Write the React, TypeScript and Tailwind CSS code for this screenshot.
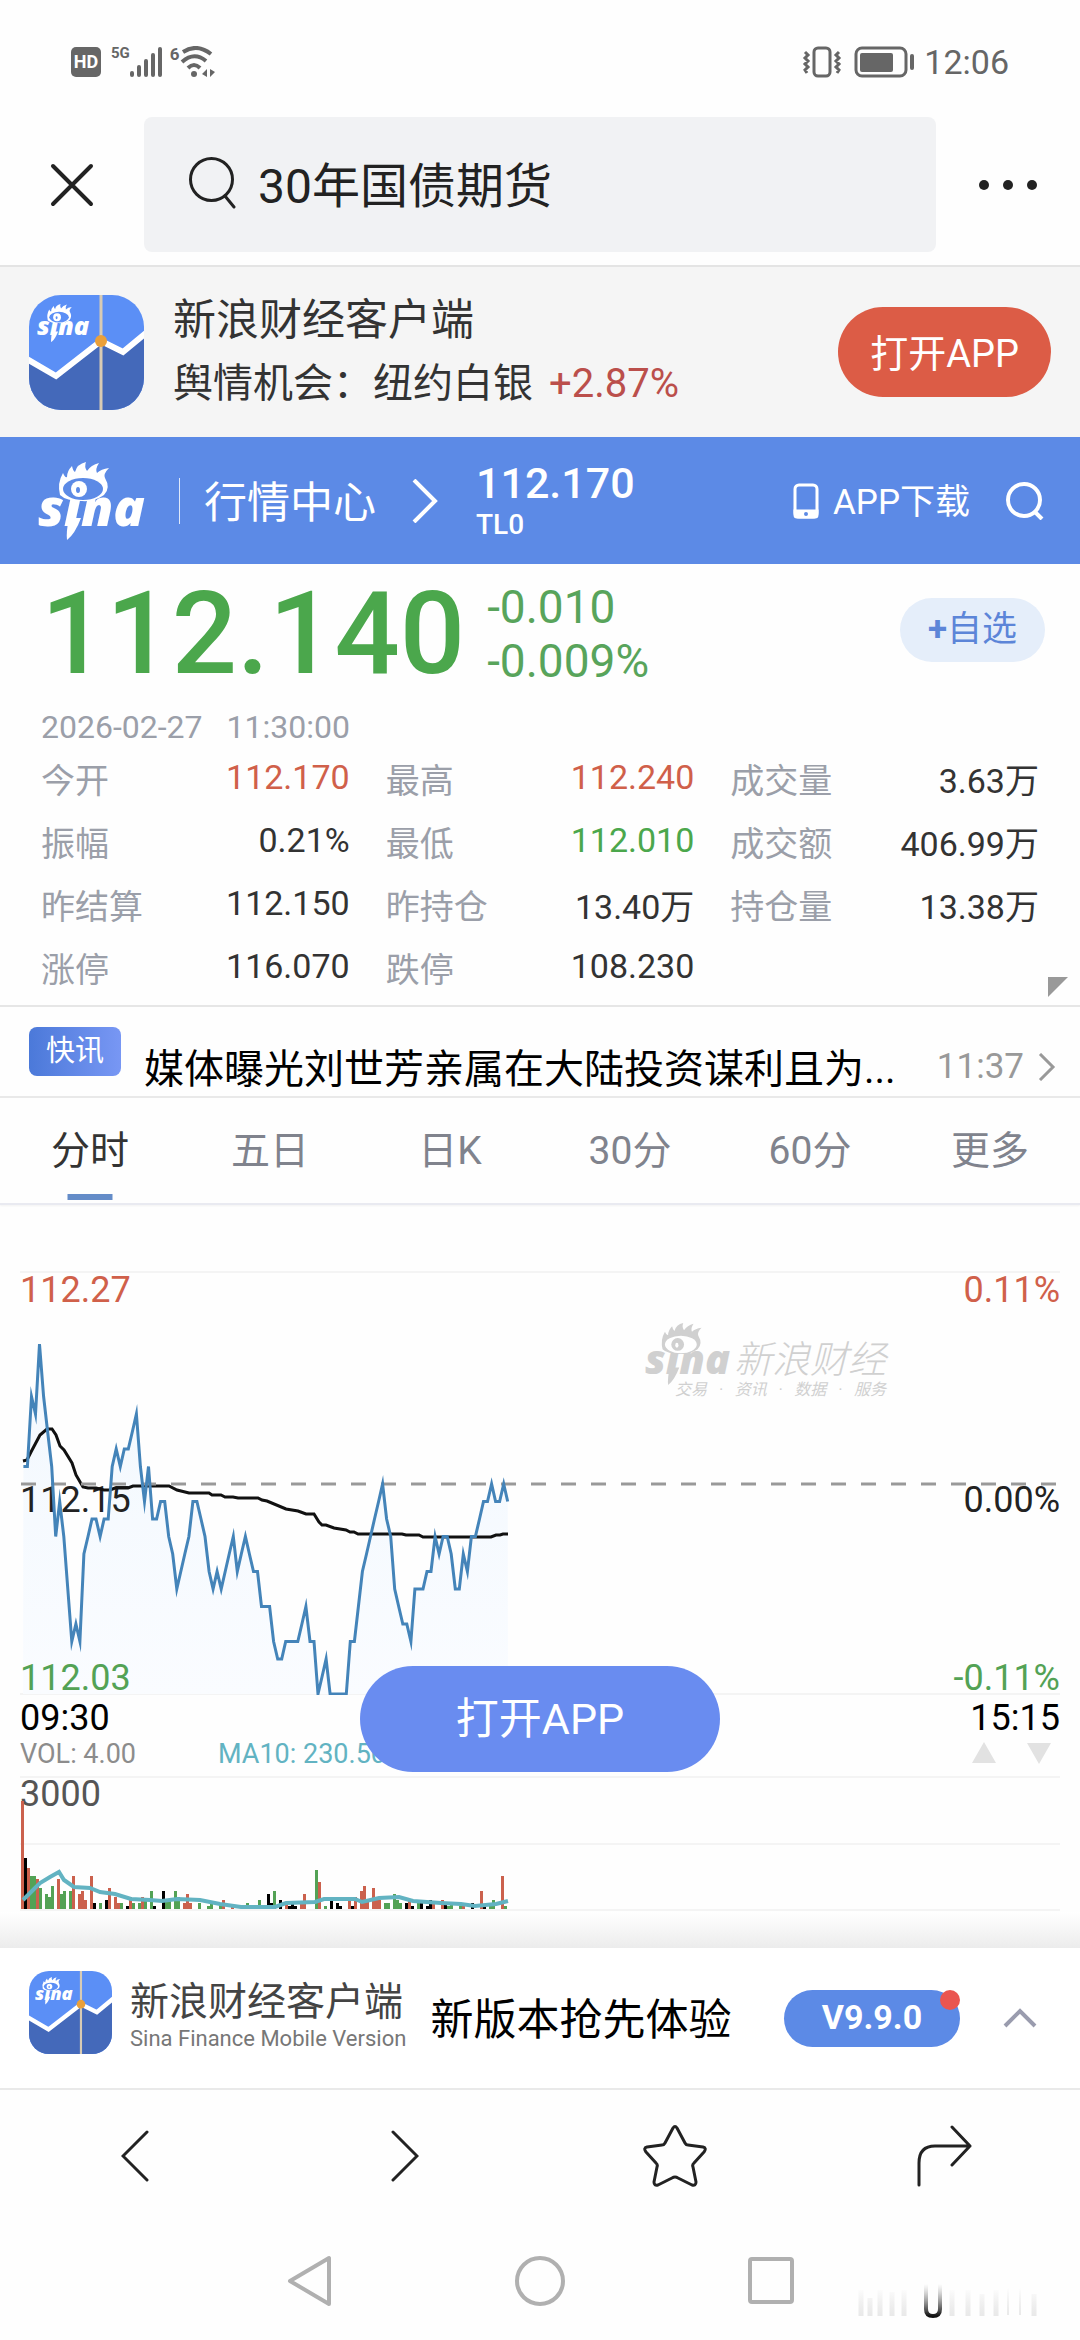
import { useState } from "react";

const QUOTES = [
  { label: "今开", value: "112.170", tone: "up" },
  { label: "最高", value: "112.240", tone: "up" },
  { label: "成交量", value: "3.63万" },
  { label: "振幅", value: "0.21%" },
  { label: "最低", value: "112.010", tone: "down" },
  { label: "成交额", value: "406.99万" },
  { label: "昨结算", value: "112.150" },
  { label: "昨持仓", value: "13.40万" },
  { label: "持仓量", value: "13.38万" },
  { label: "涨停", value: "116.070" },
  { label: "跌停", value: "108.230" },
];

const TABS = ["分时", "五日", "日K", "30分", "60分", "更多"];

// One entry per minute, in ticks of 0.01 above 112.03
const PRICES = [
  13, 13, 17, 16, 20, 17, 15, 13, 9, 11, 9, 6, 3, 4, 3, 8, 9, 10, 10, 9, 10, 10,
  13, 14, 13, 14, 14, 15, 16, 13, 11, 13, 10, 10, 11, 11, 9, 8, 6, 7, 8, 9, 11,
  11, 10, 9, 7, 6, 7, 6, 7, 8, 9, 7, 8, 9, 8, 7, 7, 5, 5, 5, 3, 2, 2, 3, 3, 3, 3,
  4, 5, 3, 3, 0, 1, 2, 0, 0, 0, 0, 0, 3, 3, 5, 7, 8, 9, 10, 11, 12, 10, 9, 6, 5,
  4, 4, 3, 6, 6, 6, 7, 7, 9, 8, 9, 9, 8, 6, 6, 8, 7, 9, 9, 10, 11, 11, 12, 11, 11,
  12, 11,
];

const AVERAGE =
  "3,190 7,189 11,181 20,164 27,158 32,158 36,164 40,175 44,179 52,192 56,204 63,216 68,217 76,217 84,219 90,219 95,217 108,217 113,215 149,215 157,219 169,222 189,222 192,224 201,224 205,226 213,226 218,227 238,227 242,229 247,230 266,238 278,240 286,243 294,243 299,251 302,254 306,254 314,257 326,259 330,261 334,261 338,263 382,263 386,264 399,264 403,266 471,266 476,264 480,264 483,263 488,263";

const VOLUME_AVERAGE =
  "3,124 11,116 20,107 30,101 39,96 44,104 54,111 70,112 80,116 95,118 111,123 130,124 142,125 157,123 180,124 200,128 221,131 242,131 255,131 266,127 295,126 304,123 335,123 342,126 359,122 379,121 393,125 421,127 441,128 455,130 476,128 488,125";

// slot, height, colour (r = up, g = down, k = flat)
const VOLUMES: [number, number, "r" | "g" | "k"][] = [
  [0, 108, "r"], [1, 51, "k"], [2, 41, "r"], [3, 33, "g"], [4, 33, "g"], [5, 30, "r"], [6, 21, "g"],
  [8, 15, "g"], [9, 12, "g"], [10, 23, "g"], [12, 30, "r"], [13, 15, "g"], [14, 18, "g"],
  [16, 18, "g"], [17, 33, "r"], [19, 15, "r"], [20, 18, "r"], [21, 9, "r"], [23, 33, "r"],
  [24, 6, "k"], [26, 6, "g"], [28, 9, "k"], [29, 21, "r"], [31, 12, "r"], [32, 6, "r"],
  [33, 6, "g"], [35, 3, "k"], [36, 12, "r"], [37, 6, "g"], [39, 6, "g"], [40, 12, "r"],
  [41, 9, "g"], [43, 18, "g"], [44, 3, "k"], [47, 18, "k"], [48, 9, "g"], [49, 9, "g"],
  [51, 18, "g"], [52, 12, "g"], [54, 6, "r"], [55, 15, "r"], [56, 6, "r"], [59, 6, "g"],
  [62, 3, "g"], [63, 6, "g"], [66, 6, "g"], [67, 9, "r"], [70, 3, "r"], [75, 6, "g"],
  [79, 9, "g"], [82, 15, "k"], [83, 6, "k"], [84, 18, "g"], [86, 9, "k"], [88, 6, "r"],
  [89, 3, "k"], [90, 6, "k"], [91, 3, "k"], [93, 6, "r"], [94, 15, "r"], [98, 39, "g"],
  [99, 27, "r"], [101, 3, "g"], [103, 9, "k"], [105, 6, "k"], [106, 3, "k"], [109, 9, "r"],
  [110, 3, "k"], [111, 12, "r"], [113, 18, "r"], [114, 23, "r"], [115, 9, "r"], [117, 21, "r"],
  [118, 12, "r"], [119, 9, "r"], [121, 6, "g"], [122, 6, "g"], [124, 15, "g"], [125, 9, "g"],
  [126, 6, "g"], [128, 6, "k"], [129, 9, "r"], [130, 3, "k"], [132, 9, "g"], [133, 6, "k"],
  [135, 3, "k"], [136, 9, "k"], [137, 6, "r"], [140, 9, "r"], [141, 6, "k"], [142, 3, "g"],
  [143, 6, "g"], [146, 3, "g"], [147, 6, "r"], [150, 6, "k"], [153, 18, "r"], [154, 3, "k"],
  [156, 3, "g"], [157, 9, "g"], [160, 33, "r"], [161, 3, "g"],
];

const BAR_COLORS = { r: "#cb614d", g: "#53a255", k: "#000000" };

const pricePoints = PRICES.map(
  (tick, i) => `${(3.4 + i * 4.036).toFixed(1)},${(423 - tick * 17.5).toFixed(1)}`,
).join(" ");

interface SinaLogoProps {
  className: string;
  color: string;
  hole: string;
}

const SinaLogo = ({ className, color, hole }: SinaLogoProps) => (
  <svg viewBox="0 0 108 78" className={className} role="img" aria-label="sina">
    <text
      x="0"
      y="64"
      fontSize="52"
      fontWeight="800"
      fontStyle="italic"
      fontFamily='"Open Sans", "Noto Sans", sans-serif'
      fill={color}
    >
      sina
    </text>
    <path d="M31 56 L43 56 Q37 72 29 78 Q28 70 31 56Z" fill={color} />
    <path
      d="M22 33 Q19 21 25 11 Q27 16 29 15 Q29 9 34 4 Q35 9 37 10 Q39 2 48 0 Q46 5 49 9 Q53 3 61 1 Q57 7 59 11 Q63 7 71 6 Q65 12 67 16 Q73 26 66 33 Q56 40 44 39 Q28 39 22 33Z"
      fill={color}
    />
    <ellipse cx="45" cy="27" rx="20" ry="11" fill={hole} />
    <circle cx="41" cy="27" r="8" fill={color} />
    <ellipse cx="40" cy="28" rx="2" ry="3" fill={hole} />
  </svg>
);

const AppLogo = ({ className }: { className: string }) => (
  <div className={`relative shrink-0 overflow-hidden ${className}`}>
    <svg viewBox="0 0 115 115" className="h-full w-full">
      <rect width="115" height="115" fill="#5b8ff6" />
      <path d="M0 66 L27 82 L72 47 L94 58 L115 41 V115 H0Z" fill="#4469ba" />
      <path d="M-2 64 L27 81 L72 46 L94 57 L117 38" fill="none" stroke="#fff" strokeWidth="6" />
      <path d="M72 0 V115" stroke="#d8cbb4" strokeWidth="3" />
      <circle cx="72" cy="46" r="6" fill="#eaa03b" />
    </svg>
    <SinaLogo className="absolute left-[7%] top-[8%] w-[46%]" color="#fff" hole="#5b8ff6" />
  </div>
);

const SearchIcon = ({ className }: { className: string }) => (
  <svg viewBox="0 0 48 54" className={className} fill="none" stroke="currentColor" strokeWidth="3">
    <circle cx="23.5" cy="23.5" r="21" />
    <path d="M37 40 L46 51" strokeLinecap="round" />
  </svg>
);

const StatusBar = () => (
  <div className="flex h-[117px] items-center justify-between pl-[71px] pr-[71px] pt-[7px] text-[#666]">
    <div className="flex items-center">
      <span className="flex h-[30px] w-[30px] items-center justify-center rounded-[5px] bg-[#666] text-[18px] font-bold leading-none text-white">
        HD
      </span>
      <span className="ml-[10px] self-start text-[15px] font-bold leading-none">5G</span>
      <svg viewBox="0 0 32 32" className="h-8 w-8" fill="currentColor">
        <rect x="0" y="25" width="4" height="6" rx="2" />
        <rect x="7" y="19" width="4" height="12" rx="2" />
        <rect x="14" y="13" width="4" height="18" rx="2" />
        <rect x="21" y="7" width="4" height="24" rx="2" />
        <rect x="28" y="1" width="4" height="30" rx="2" />
      </svg>
      <span className="ml-2 self-start text-[17px] font-bold leading-none">6</span>
      <svg viewBox="0 0 36 32" className="h-8 w-9" fill="none" stroke="currentColor" strokeWidth="4">
        <path d="M3 6 Q17 -3 31 8" />
        <path d="M2 16 Q14 5 26 15" />
        <path d="M8 22 Q14 16 20 22" />
        <circle cx="14" cy="28" r="3" fill="currentColor" stroke="none" />
        <path d="M27 23 V31 L22 28Z M30 23 V31 L35 26Z" fill="currentColor" stroke="none" />
      </svg>
    </div>
    <div className="flex items-center">
      <svg viewBox="0 0 40 32" className="h-8 w-10" fill="none" stroke="currentColor" strokeWidth="3">
        <rect x="12" y="2" width="16" height="28" rx="4" />
        <path d="M3 6 L6 9 L3 12 L6 15 L3 18 L6 21 L3 24 L5 27 M37 6 L34 9 L37 12 L34 15 L37 18 L34 21 L37 24 L35 27" />
      </svg>
      <svg viewBox="0 0 60 32" className="ml-3 h-8 w-[60px]">
        <rect x="2" y="2" width="50" height="28" rx="6" fill="none" stroke="currentColor" strokeWidth="3" />
        <rect x="6" y="7" width="33" height="19" rx="2" fill="currentColor" />
        <rect x="56" y="8" width="4" height="16" rx="2" fill="currentColor" />
      </svg>
      <span className="ml-[10px] text-[34px] leading-9">12:06</span>
    </div>
  </div>
);

const SearchRow = () => (
  <div className="border-b-2 border-[#e4e4e4] pb-[13px]">
    <div className="flex h-[135px] items-center">
      <button aria-label="关闭" className="flex w-36 justify-center text-[#222]">
        <svg viewBox="0 0 44 44" className="h-11 w-11" stroke="currentColor" strokeWidth="4" strokeLinecap="round">
          <path d="M3 3 L41 41 M41 3 L3 41" />
        </svg>
      </button>
      <label className="flex h-full flex-1 items-center rounded-lg bg-[#f1f2f4] pl-11 text-[#222]">
        <SearchIcon className="mb-1 h-[54px] w-12 shrink-0" />
        <input
          aria-label="搜索"
          defaultValue="30年国债期货"
          className="ml-[22px] mt-1 min-w-0 flex-1 bg-transparent text-[48px] leading-[60px] outline-none"
        />
      </label>
      <button aria-label="更多" className="flex w-36 justify-center text-[#222]">
        <svg viewBox="0 0 60 12" className="h-3 w-[60px]" fill="currentColor">
          <circle cx="6" cy="6" r="5" />
          <circle cx="30" cy="6" r="5" />
          <circle cx="54" cy="6" r="5" />
        </svg>
      </button>
    </div>
  </div>
);

const Promo = () => (
  <div className="flex h-[170px] items-center bg-[#f5f5f5] px-[29px]">
    <AppLogo className="h-[115px] w-[115px] rounded-[32px]" />
    <div className="ml-[29px] flex-1 text-[#333]">
      <p className="text-[43px] leading-[64px]">新浪财经客户端</p>
      <p className="text-[40px] leading-[64px]">
        舆情机会：纽约白银<span className="ml-4 text-[#bb4f4b]">+2.87%</span>
      </p>
    </div>
    <button className="h-[90px] w-[213px] rounded-full bg-[#dc5c46] pt-1 text-[38px] text-white">打开APP</button>
  </div>
);

const Header = () => (
  <header className="flex h-[127px] items-center bg-[#5c8ae6] pl-[38px] pr-9 text-white">
    <SinaLogo className="h-[78px] w-[108px]" color="#fff" hole="#5c8ae6" />
    <div className="ml-[33px] h-[46px] w-px bg-white/80" />
    <a href="#" className="ml-6 pt-1 text-[43px] leading-[52px]">行情中心</a>
    <svg viewBox="0 0 26 44" className="ml-9 h-11 w-[26px]" fill="none" stroke="currentColor" strokeWidth="4">
      <path d="M2 1 L23 22 L2 43" />
    </svg>
    <div className="ml-[38px] flex-1 pt-1 font-medium">
      <p className="text-[43px] leading-[44px]">112.170</p>
      <p className="text-[28px] leading-[40px]">TL0</p>
    </div>
    <a href="#" className="flex items-center text-[35px] leading-[44px]">
      <svg viewBox="0 0 26 36" className="mr-[14px] h-9 w-[26px]" fill="none" stroke="currentColor" strokeWidth="3">
        <rect x="2" y="2" width="22" height="32" rx="4" />
        <path d="M2 28 H24 V32 Q24 34 22 34 H4 Q2 34 2 32Z" fill="currentColor" />
        <circle cx="13" cy="31" r="1" stroke="#5c8ae6" strokeWidth="2" />
      </svg>
      <span className="pt-1">APP下载</span>
    </a>
    <button aria-label="搜索" className="ml-9">
      <svg viewBox="0 0 38 38" className="h-[38px] w-[38px]" fill="none" stroke="currentColor" strokeWidth="4">
        <circle cx="18" cy="18" r="16" />
        <path d="M29 30 L36 37" />
      </svg>
    </button>
  </header>
);

const QuotePanel = () => (
  <section className="relative h-[443px] border-b-2 border-[#e6e6e6] px-[41px] pt-[18px]">
    <div className="flex h-[104px] items-center">
      <p className="text-[115px] font-medium leading-[104px] text-[#4ba74c]">112.140</p>
      <div className="ml-[22px] flex-1 text-[46px] leading-[54px] text-[#58a45b]">
        <p>-0.010</p>
        <p>-0.009%</p>
      </div>
      <button className="-mr-[6px] mb-2 h-16 w-[145px] rounded-full bg-[#e5eefa] text-[35px] text-[#5c85d8]">
        <b>+</b>自选
      </button>
    </div>
    <p className="mt-[23px] text-[32px] leading-9 text-[#9b9fa9]">
      2026-02-27<span className="ml-6">11:30:00</span>
    </p>
    <dl className="mt-[14px] grid grid-cols-3 gap-x-9 text-[34px]">
      {QUOTES.map(({ label, value, tone }) => (
        <div key={label} className="flex h-[63px] items-start justify-between">
          <dt className="leading-[44px] text-[#9b9fa9]">{label}</dt>
          <dd
            className={`${value.endsWith("万") ? "leading-[44px]" : "leading-9"} ${
              tone === "up" ? "text-[#d0604a]" : tone === "down" ? "text-[#4ba74c]" : "text-[#333]"
            }`}
          >
            {value}
          </dd>
        </div>
      ))}
    </dl>
    <svg viewBox="0 0 20 20" className="absolute bottom-2 right-3 h-5 w-5" fill="#999">
      <path d="M0 0 H20 L0 20Z" />
    </svg>
  </section>
);

const NewsRow = () => (
  <a href="#" className="flex h-[91px] items-start border-b-2 border-[#e9e9e9] px-[29px] pr-6">
    <span className="mt-5 h-[49px] w-[92px] rounded-lg bg-linear-to-r from-[#4b79d9] to-[#7897f4] text-center text-[29px] leading-[48px] text-white">
      快讯
    </span>
    <span className="ml-[23px] mt-9 flex-1 truncate text-[40px] leading-[54px] text-black">
      媒体曝光刘世芳亲属在大陆投资谋利且为...
    </span>
    <span className="mt-9 text-[35px] leading-[48px] text-[#999]">11:37</span>
    <svg viewBox="0 0 18 28" className="ml-[14px] mt-[46px] h-7 w-[18px]" fill="none" stroke="#999" strokeWidth="3">
      <path d="M2 1 L15 14 L2 27" />
    </svg>
  </a>
);

const Watermark = () => (
  <div className="absolute right-[174px] top-[52px] flex items-start text-[#d0d0d0]">
    <SinaLogo className="h-[62px] w-[86px]" color="#d0d0d0" hole="#fff" />
    <div className="-ml-14 mt-4 text-right italic">
      <p className="text-[38px] font-light leading-[42px]">新浪财经</p>
      <p className="whitespace-pre text-[16px] leading-[18px]">交易   ·   资讯   ·   数据   ·   服务</p>
    </div>
  </div>
);

const PriceChart = () => (
  <div className="relative h-[424px] text-[36px] leading-9">
    <svg viewBox="0 0 1040 424" preserveAspectRatio="none" className="h-full w-full">
      <defs>
        <linearGradient id="area" x1="0" y1="0" x2="0" y2="1">
          <stop offset="0" stopColor="#f0f7fe" stopOpacity="0.8" />
          <stop offset="1" stopColor="#fafcff" />
        </linearGradient>
      </defs>
      <path d="M0 1 H1040 M0 423 H1040" stroke="#f4f4f4" strokeWidth="2" />
      <polygon points={`3,423 ${pricePoints} 488,423`} fill="url(#area)" />
    </svg>
    <div className="absolute inset-x-0 top-px flex h-full flex-col justify-between">
      <div className="flex justify-between text-[#d0604a]">
        <span>112.27</span>
        <span>0.11%</span>
      </div>
      <div className="flex justify-between pt-8 text-[#222]">
        <span>112.15</span>
        <span>0.00%</span>
      </div>
      <div className="flex justify-between text-[#53a255]">
        <span>112.03</span>
        <span>-0.11%</span>
      </div>
    </div>
    <svg
      viewBox="0 0 1040 424"
      preserveAspectRatio="none"
      className="absolute inset-0 h-full w-full"
      fill="none"
      strokeMiterlimit="10"
    >
      <polyline points={AVERAGE} stroke="#111" strokeWidth="3" />
      <path d="M1 213 H1040" stroke="#999" strokeWidth="3" strokeDasharray="15 15" />
      <polyline points={pricePoints} stroke="#4484b9" strokeWidth="3" />
    </svg>
    <Watermark />
  </div>
);

const VolumeChart = () => (
  <div className="relative h-[136px]">
    <span className="absolute left-0 top-0 text-[36px] leading-9 text-[#555]">3000</span>
    <svg viewBox="0 0 1040 136" preserveAspectRatio="none" className="relative h-full w-full">
      <path d="M0 1 H1040 M0 68 H1040 M0 134 H1040" stroke="#f4f4f4" strokeWidth="2" />
      {VOLUMES.map(([slot, height, color]) => (
        <rect key={slot} x={1 + slot * 3} y={133 - height} width="3" height={height} fill={BAR_COLORS[color]} />
      ))}
      <polyline points={VOLUME_AVERAGE} fill="none" stroke="#62b3c2" strokeWidth="4" />
    </svg>
  </div>
);

const BottomBar = () => (
  <div className="relative flex h-[142px] items-center border-b-2 border-[#e9e9e9] bg-white pl-[29px] pr-[43px]">
    <AppLogo className="mb-3 h-[83px] w-[83px] rounded-[20px]" />
    <div className="mb-1 ml-[18px] text-[#444]">
      <p className="text-[39px] leading-[46px]">新浪财经客户端</p>
      <p className="text-[22px] leading-7 text-[#777]">Sina Finance Mobile Version</p>
    </div>
    <p className="ml-6 flex-1 pt-1 text-[43px] leading-[52px] text-black">新版本抢先体验</p>
    <button className="relative h-[57px] w-[176px] rounded-full bg-[#5c8ae6] pb-0.5 text-[34px] font-bold text-white">
      V9.9.0
      <span className="absolute right-0 top-0 h-5 w-5 rounded-full bg-[#ea5550]" />
    </button>
    <button aria-label="展开" className="ml-[43px]">
      <svg viewBox="0 0 34 20" className="h-5 w-[34px]" fill="none" stroke="#9a9cae" strokeWidth="4">
        <path d="M2 18 L17 3 L32 18" />
      </svg>
    </button>
  </div>
);

const BrowserNav = () => (
  <nav className="grid h-[132px] grid-cols-4 place-items-center text-[#222]">
    <button aria-label="后退">
      <svg viewBox="0 0 28 52" className="h-[52px] w-7" fill="none" stroke="currentColor" strokeWidth="3" strokeLinecap="round">
        <path d="M26 2 L2 26 L26 50" />
      </svg>
    </button>
    <button aria-label="前进">
      <svg viewBox="0 0 28 52" className="h-[52px] w-7" fill="none" stroke="currentColor" strokeWidth="3" strokeLinecap="round">
        <path d="M2 2 L26 26 L2 50" />
      </svg>
    </button>
    <button aria-label="收藏">
      <svg viewBox="0 0 64 62" className="h-[62px] w-16" fill="none" stroke="currentColor" strokeWidth="3" strokeLinejoin="round">
        <path d="M30 3 Q32 0 34 3 L42 18 Q43 20 45 20 L60 22 Q64 23 61 27 L51 38 Q49 40 50 42 L53 57 Q53 61 49 60 L35 53 Q32 51 29 53 L15 60 Q11 61 11 57 L14 42 Q15 40 13 38 L3 27 Q0 23 4 22 L19 20 Q21 20 22 18Z" />
      </svg>
    </button>
    <button aria-label="分享">
      <svg viewBox="0 0 56 62" className="h-[62px] w-14" fill="none" stroke="currentColor" strokeWidth="3" strokeLinecap="round" strokeLinejoin="round">
        <path d="M2 60 V38 Q2 21 18 21 H53 M35 2 L53 21 L35 40" />
      </svg>
    </button>
  </nav>
);

const SystemNav = () => (
  <div className="relative flex h-[118px] items-center justify-center gap-[182px] text-[#b0b0b0]">
    <button aria-label="返回">
      <svg viewBox="0 0 46 52" className="h-[52px] w-[46px]" fill="none" stroke="currentColor" strokeWidth="4" strokeLinejoin="round">
        <path d="M43 3 V49 L4 26Z" />
      </svg>
    </button>
    <button aria-label="主屏幕">
      <svg viewBox="0 0 52 52" className="h-[52px] w-[52px]" fill="none" stroke="currentColor" strokeWidth="4">
        <circle cx="26" cy="26" r="23" />
      </svg>
    </button>
    <button aria-label="最近任务">
      <svg viewBox="0 0 46 48" className="h-12 w-[46px]" fill="none" stroke="currentColor" strokeWidth="4">
        <rect x="2" y="2" width="42" height="43" rx="2" />
      </svg>
    </button>
    <svg viewBox="0 0 200 40" className="absolute bottom-5 right-6 h-10 w-[200px]" fill="none">
      <defs>
        <linearGradient id="fade" gradientUnits="userSpaceOnUse" x1="0" y1="4" x2="0" y2="36">
          <stop offset="0" stopColor="#888" stopOpacity="0" />
          <stop offset="1" stopColor="#111" />
        </linearGradient>
        <linearGradient id="streak" gradientUnits="userSpaceOnUse" x1="0" y1="8" x2="0" y2="38">
          <stop offset="0" stopColor="#ddd" stopOpacity="0" />
          <stop offset="1" stopColor="#e8e8e8" />
        </linearGradient>
      </defs>
      <path d="M5 10 V36 M14 18 V36 M24 10 V36 M36 12 V36 M48 10 V36 M96 10 V36 M112 10 V36 M126 14 V36 M140 10 V36 M178 14 V36" stroke="url(#streak)" strokeWidth="5" />
      <path d="M152 8 V35 M164 8 V35" stroke="url(#streak)" strokeWidth="2" />
      <path d="M70 2 V29 Q70 36 77 36 Q84 36 84 29 V2" stroke="url(#fade)" strokeWidth="4" />
    </svg>
  </div>
);

const App = () => {
  const [activeTab, setActiveTab] = useState("分时");

  return (
    <div className='min-h-screen w-full bg-[#fefefe] font-[Roboto,"Noto_Sans_CJK_SC",sans-serif]'>
      <StatusBar />
      <SearchRow />
      <Promo />
      <Header />
      <QuotePanel />
      <NewsRow />
      <div role="tablist" className="grid h-[107px] grid-cols-6 border-b-2 border-[#e9eaf1] shadow-xs">
        {TABS.map((tab) => (
          <button
            key={tab}
            role="tab"
            aria-selected={tab === activeTab}
            onClick={() => setActiveTab(tab)}
            className={`relative pt-0.5 text-[39px] ${tab === activeTab ? "text-[#333]" : "text-[#80838d]"}`}
          >
            {tab}
            {tab === activeTab && (
              <span className="absolute bottom-[3px] left-1/2 h-[6px] w-[45px] -translate-x-1/2 bg-[#648cc8]" />
            )}
          </button>
        ))}
      </div>
      <main className="relative px-5 pt-[66px]">
        <PriceChart />
        <div className="flex h-[46px] items-center justify-between text-[36px] leading-9 text-black">
          <span>09:30</span>
          <span>15:15</span>
        </div>
        <div className="flex h-[35px] items-start text-[27px] leading-[26px]">
          <span className="w-[198px] text-[#8c8c8c]">VOL: 4.00</span>
          <span className="flex-1 text-[#62b3c2]">MA10: 230.50</span>
          <svg viewBox="0 0 80 24" className="mr-2 h-6 w-20" fill="#e2e2e2">
            <path d="M0 22 L12 1 L24 22Z M55 2 H79 L67 23Z" />
          </svg>
        </div>
        <VolumeChart />
        <div className="-mx-5 h-9 bg-linear-to-b from-white to-[#ececec]" />
        <button className="absolute bottom-[176px] left-1/2 h-[106px] w-[360px] -translate-x-1/2 rounded-full bg-[#698cf0] text-[43px] text-white">
          打开APP
        </button>
      </main>
      <BottomBar />
      <BrowserNav />
      <SystemNav />
    </div>
  );
};

export default App;
